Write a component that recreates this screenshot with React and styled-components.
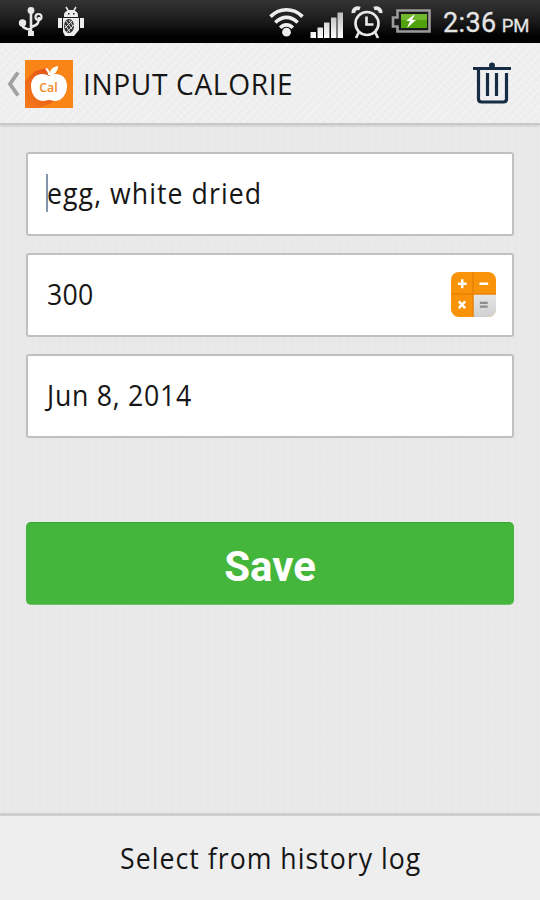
import React from "react";
import styled, { createGlobalStyle } from "styled-components";

const Global = createGlobalStyle`
  * { box-sizing: border-box; }
  body { margin: 0; }
`;

const Screen = styled.div`
  width: 540px;
  height: 900px;
  display: flex;
  flex-direction: column;
  overflow: hidden;
  font-family: "Open Sans", sans-serif;
  color: #161616;
  background:
    repeating-linear-gradient(90deg, rgba(255,255,255,.08) 0 2px, transparent 2px 7px),
    repeating-linear-gradient(0deg, rgba(255,255,255,.05) 0 1px, transparent 1px 6px),
    #e8e8e8;
`;

const StatusBar = styled.div`
  flex: none;
  height: 43px;
  display: flex;
  align-items: center;
  background: linear-gradient(#343434, #1a1a1a 50%, #020202 82%, #000);
`;

const StatusIcon = styled.svg`
  flex: none;
  display: block;
  margin-left: ${(p) => p.$gap}px;
`;

const Clock = styled.div`
  margin-left: 11px;
  font: 400 27px/44px Roboto, sans-serif;
  letter-spacing: 0.4px;
  color: #e4e4e4;
  -webkit-text-stroke: 0.3px #e4e4e4;
  white-space: nowrap;
  display: flex;
  align-items: baseline;
  gap: 5px;
  padding-top: 5px;
`;

const Meridiem = styled.span`
  font-size: 18.5px;
  letter-spacing: 0;
`;

const Header = styled.header`
  flex: none;
  height: 82px;
  display: flex;
  align-items: center;
  padding-top: 1px;
  border-bottom: 2px solid #c9c9c9;
  box-shadow: 0 1px 2px rgba(0,0,0,.14);
  background:
    repeating-linear-gradient(45deg, rgba(0,0,0,.012) 0 1px, transparent 1px 5px),
    repeating-linear-gradient(-45deg, rgba(255,255,255,.35) 0 1px, transparent 1px 6px),
    #efefef;
`;

const Text = styled.span`
  display: inline-block;
  white-space: pre;
  font-size: ${(p) => p.$size || 29}px;
  line-height: 40px;
  letter-spacing: ${(p) => p.$track || 0}px;
  transform: scaleX(${(p) => p.$stretch || 1});
  transform-origin: ${(p) => p.$origin || "left"} center;
`;

const Title = styled.h1`
  flex: 1;
  margin: 0 0 5px 10px;
  font-weight: 400;
  height: 40px;
`;

const IconButton = styled.button`
  display: block;
  border: 0;
  padding: 0;
  background: none;
  margin-right: ${(p) => p.$right}px;
  height: ${(p) => p.$height}px;
`;

const Form = styled.main`
  flex: 1;
  display: flex;
  flex-direction: column;
  padding: 27px 26px 0;
`;

const Field = styled.div`
  height: 84px;
  margin-bottom: 17px;
  padding: 0 16px 2px 19px;
  display: flex;
  align-items: center;
  justify-content: space-between;
  background: #fff;
  border: 2px solid #c0c0c0;
  border-radius: 3px;
`;

const Entry = styled.div`
  position: relative;
  display: flex;
`;

const Caret = styled.i`
  position: absolute;
  left: -1px;
  top: 1px;
  width: 2px;
  height: 38px;
  background: #8594ad;
`;

const Save = styled.button`
  height: 83px;
  margin-top: 67px;
  padding: 6px 0 0;
  border: 0;
  border-top: 1px solid #36a52e;
  border-bottom: 1px solid #6fc067;
  border-radius: 5px;
  background: #45b63c;
  color: #fff;
  font: 700 42px/1 Roboto, sans-serif;
`;

const Footer = styled.footer`
  flex: none;
  height: 87px;
  padding-left: 2px;
  border-top: 3px solid #cfcfcf;
  background: #eee;
  display: flex;
  align-items: center;
  justify-content: center;
`;

const Usb = () => (
  <StatusIcon $gap={18} width="26" height="32" viewBox="0 0 26 32" fill="none" stroke="#e8e8e8" strokeWidth="2.6">
    <path d="M13 6v22M13 24C5 22 4 21 4 17M13 21c7-2 8-4 8-10" />
    <circle cx="13" cy="4.500" r="3.400" fill="#e8e8e8" stroke="none" />
    <circle cx="4.500" cy="17" r="3.700" fill="#e8e8e8" stroke="none" />
    <circle cx="20.500" cy="11" r="3" strokeWidth="2.200" />
    <path d="M10 25h6v5h-6z" fill="#e8e8e8" stroke="none" />
  </StatusIcon>
);

const Debug = () => (
  <StatusIcon $gap={13} width="28" height="32" viewBox="0 0 28 32" fill="#ececec">
    <path d="M7 9c0-3 3-5 7-5s7 2 7 5v2H7zM1 12h4v10H1zM23 12h4v10h-4zM6 12h16v12l-5 6h-9l-2-4z" />
    <path d="M9 1l3 5M19 1l-3 5" stroke="#ececec" strokeWidth="1.500" />
    <ellipse cx="12" cy="20" rx="5" ry="7" fill="#333" />
    <path d="M9 15l6 8M8 19l5 7M12 14l4 6M15 15l-7 7M17 19l-7 7" stroke="#ddd" strokeWidth="1" />
    <path d="M11 7h1.500v1.500H11zM16 7h1.500v1.500H16z" fill="#222" />
  </StatusIcon>
);

const Wifi = () => (
  <StatusIcon $gap={183} width="37" height="31" viewBox="0 0 38 32" fill="none" stroke="#eee" strokeWidth="3.800">
    <path d="M2.500 11C12 1.500 26 1.500 35.500 11M7.500 17c7-7 16-7 23 0M12.500 22.500c4-4 9-4 13 0" />
    <circle cx="19" cy="27" r="4.500" fill="#eee" stroke="none" />
  </StatusIcon>
);

const Signal = () => (
  <StatusIcon $gap={5} width="34" height="32" viewBox="0 0 34 32">
    <defs>
      <linearGradient id="bars" x2="0" y2="1">
        <stop stopColor="#bbb" />
        <stop offset="1" stopColor="#fff" />
      </linearGradient>
    </defs>
    <path fill="url(#bars)" d="M.5 26h5.500v6H.500zM7.500 21.500h5.500V32H7.500zM14 16.500h5.500V32H14zM21 11.500h5.500V32H21zM27.500 6.500H33V32h-5.500z" />
  </StatusIcon>
);

const Alarm = () => (
  <StatusIcon $gap={7} width="32" height="34" viewBox="0 0 32 34" fill="none" stroke="#e8e8e8" strokeWidth="2.700">
    <circle cx="16" cy="18.500" r="11.500" />
    <path d="M15.500 11.500v8h7M8 27l-3 6M24 27l3 6" />
    <path d="M2.500 8C2 5 5 2 9 3.500M23 3.500c4-1.500 7 1.500 6.500 4.500" strokeWidth="3.800" />
  </StatusIcon>
);

const Battery = () => (
  <StatusIcon $gap={8} width="41" height="25" viewBox="0 0 41 25">
    <path d="M6.500 1.500h32v21h-32v-5H2v-9h4.500z" fill="#191919" stroke="#9b9b9b" strokeWidth="2.600" />
    <path d="M10 5h26v14H10z" fill="#50a20d" />
    <path d="M10 5h26v6H10z" fill="#72b82e" />
    <path d="M24 5l-9 7h4l-3 7 9-8h-4z" fill="#fff" />
  </StatusIcon>
);

const Back = () => (
  <StatusIcon $gap={7} width="14" height="28" viewBox="0 0 14 28" fill="none" stroke="#a0a0a0" strokeWidth="3.800">
    <path d="M11 2.500L3 14l8 11.500" />
  </StatusIcon>
);

const Logo = () => (
  <StatusIcon $gap={4} width="48" height="48" viewBox="0 0 48 48">
    <defs>
      <linearGradient id="shade" x1="0" y1="1" x2="1" y2="0">
        <stop stopColor="#f47a18" />
        <stop offset="1" stopColor="#e2501a" />
      </linearGradient>
    </defs>
    <path fill="#f98518" d="M0 0h48v48H0z" />
    <path fill="url(#shade)" d="M0 21L10 11l11-3 4 9-5 21 9 3-4 3-12 4H0z" />
    <path fill="#fff" d="M24 16c-5-4-18-3-18 10 0 9 6 15 12 15 3 0 3-1 6-1s3 1 6 1c6 0 12-6 12-15 0-13-13-14-18-10zM23 15c0-3-1-4-3-6l2-1c2 2 3 4 3 6 0-5 3-7 8-8 0 5-3 9-8 9z" />
    <text x="23.500" y="32" textAnchor="middle" fontFamily="Open Sans, sans-serif" fontSize="12.500" fontWeight="600" fill="#f28b2c">Cal</text>
  </StatusIcon>
);

const Trash = () => (
  <svg width="40" height="43" viewBox="0 0 40 43" fill="none" stroke="#162c45" strokeWidth="3.200">
    <path d="M1 6.500h38M6.500 6v31q0 3 3 3h22q3 0 3-3V11M15.500 11v23M24.500 11v23" />
    <circle cx="20" cy="3.500" r="3" fill="#162c45" stroke="none" />
  </svg>
);

const Calculator = () => (
  <svg width="45" height="45" viewBox="0 0 46 46">
    <defs>
      <clipPath id="tile"><rect width="46" height="46" rx="8" /></clipPath>
      <linearGradient id="key" x2="0" y2="1">
        <stop stopColor="#e6e6e6" />
        <stop offset="1" stopColor="#cfcfcf" />
      </linearGradient>
    </defs>
    <g clipPath="url(#tile)">
      <path fill="#f9940a" d="M0 0h46v46H0z" />
      <path fill="url(#key)" d="M23 23h23v23H23z" />
      <path d="M22.500 0v46M0 22.500h46" stroke="#df7a05" />
      <path d="M7 12h9M11.500 7.500v9M29 12h9M8 30l6.500 7M14.500 30L8 37" stroke="#fff" strokeWidth="2.500" />
      <path d="M29.500 31.500h8M29.500 35.500h8" stroke="#8b8b8b" strokeWidth="2.300" />
    </g>
  </svg>
);

export default function App() {
  return (
    <Screen>
      <Global />
      <StatusBar>
        <Usb />
        <Debug />
        <Wifi />
        <Signal />
        <Alarm />
        <Battery />
        <Clock>2:36<Meridiem>PM</Meridiem></Clock>
      </StatusBar>
      <Header>
        <Back />
        <Logo />
        <Title><Text $stretch={0.97} $track={0.65}>INPUT CALORIE</Text></Title>
        <IconButton $right={28} $height={43} aria-label="Delete"><Trash /></IconButton>
      </Header>
      <Form>
        <Field>
          <Entry><Text $stretch={0.92} $track={1.15}>egg, white dried</Text><Caret /></Entry>
        </Field>
        <Field>
          <Entry><Text $stretch={0.92} $track={0.3}>300</Text></Entry>
          <IconButton $right={0} $height={45} aria-label="Calculator"><Calculator /></IconButton>
        </Field>
        <Field>
          <Entry><Text $stretch={0.92} $track={0.8}>Jun 8, 2014</Text></Entry>
        </Field>
        <Save>Save</Save>
      </Form>
      <Footer><Text $origin="center" $stretch={0.92} $track={1.1}>Select from history log</Text></Footer>
    </Screen>
  );
}
